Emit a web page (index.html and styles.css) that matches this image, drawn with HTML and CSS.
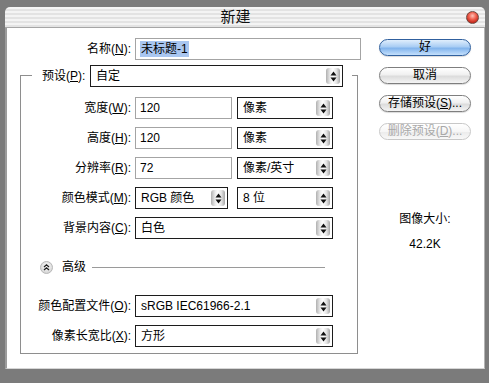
FILE: index.html
```html
<!DOCTYPE html>
<html lang="zh-CN">
<head>
<meta charset="utf-8">
<title>新建</title>
<link rel="stylesheet" href="styles.css">
</head>
<body>
<div class="window">
  <div class="titlebar"><span class="title">新建</span><span class="close"></span></div>
  <div class="content">
    <div class="form">
      <div class="row name-row">
        <span class="lbl">名称(<u>N</u>):</span>
        <div class="field input name-input"><span class="hl">未标题-1</span></div>
      </div>
      <div class="group">
        <div class="legend">
          <span class="legend-lbl">预设(<u>P</u>):</span>
          <div class="field select preset"><span class="val">自定</span><span class="spin"><svg width="7" height="11" viewBox="0 0 7 11"><path d="M3.5 0.5L6.5 4.5H0.5Z M0.5 6.5H6.5L3.5 10.5Z" fill="#111"/></svg></span></div>
        </div>
        <div class="row first">
          <span class="lbl">宽度(<u>W</u>):</span>
          <div class="field input num">120</div>
          <div class="field select unit"><span class="val">像素</span><span class="spin"><svg width="7" height="11" viewBox="0 0 7 11"><path d="M3.5 0.5L6.5 4.5H0.5Z M0.5 6.5H6.5L3.5 10.5Z" fill="#111"/></svg></span></div>
        </div>
        <div class="row">
          <span class="lbl">高度(<u>H</u>):</span>
          <div class="field input num">120</div>
          <div class="field select unit"><span class="val">像素</span><span class="spin"><svg width="7" height="11" viewBox="0 0 7 11"><path d="M3.5 0.5L6.5 4.5H0.5Z M0.5 6.5H6.5L3.5 10.5Z" fill="#111"/></svg></span></div>
        </div>
        <div class="row">
          <span class="lbl">分辨率(<u>R</u>):</span>
          <div class="field input num">72</div>
          <div class="field select unit"><span class="val">像素/英寸</span><span class="spin"><svg width="7" height="11" viewBox="0 0 7 11"><path d="M3.5 0.5L6.5 4.5H0.5Z M0.5 6.5H6.5L3.5 10.5Z" fill="#111"/></svg></span></div>
        </div>
        <div class="row">
          <span class="lbl">颜色模式(<u>M</u>):</span>
          <div class="field select mode"><span class="val">RGB 颜色</span><span class="spin"><svg width="7" height="11" viewBox="0 0 7 11"><path d="M3.5 0.5L6.5 4.5H0.5Z M0.5 6.5H6.5L3.5 10.5Z" fill="#111"/></svg></span></div>
          <div class="field select unit"><span class="val">8 位</span><span class="spin"><svg width="7" height="11" viewBox="0 0 7 11"><path d="M3.5 0.5L6.5 4.5H0.5Z M0.5 6.5H6.5L3.5 10.5Z" fill="#111"/></svg></span></div>
        </div>
        <div class="row">
          <span class="lbl">背景内容(<u>C</u>):</span>
          <div class="field select full"><span class="val">白色</span><span class="spin"><svg width="7" height="11" viewBox="0 0 7 11"><path d="M3.5 0.5L6.5 4.5H0.5Z M0.5 6.5H6.5L3.5 10.5Z" fill="#111"/></svg></span></div>
        </div>
        <div class="advanced">
          <span class="adv-icon"><svg width="13" height="13" viewBox="0 0 13 13"><defs><radialGradient id="g" cx="50%" cy="40%" r="60%"><stop offset="0" stop-color="#ffffff"/><stop offset="1" stop-color="#d2d2d2"/></radialGradient></defs><circle cx="6.5" cy="6.5" r="6" fill="url(#g)" stroke="#b8b8b8"/><path d="M4 6L6.5 3.8L9 6 M4 9L6.5 6.8L9 9" fill="none" stroke="#222" stroke-width="1.3"/></svg></span>
          <span class="adv-text">高级</span>
          <span class="adv-line"></span>
        </div>
        <div class="row after-adv">
          <span class="lbl">颜色配置文件(<u>O</u>):</span>
          <div class="field select full"><span class="val">sRGB IEC61966-2.1</span><span class="spin"><svg width="7" height="11" viewBox="0 0 7 11"><path d="M3.5 0.5L6.5 4.5H0.5Z M0.5 6.5H6.5L3.5 10.5Z" fill="#111"/></svg></span></div>
        </div>
        <div class="row">
          <span class="lbl">像素长宽比(<u>X</u>):</span>
          <div class="field select full"><span class="val">方形</span><span class="spin"><svg width="7" height="11" viewBox="0 0 7 11"><path d="M3.5 0.5L6.5 4.5H0.5Z M0.5 6.5H6.5L3.5 10.5Z" fill="#111"/></svg></span></div>
        </div>
      </div>
    </div>
    <div class="side">
      <div class="btn primary">好</div>
      <div class="btn">取消</div>
      <div class="btn">存储预设(<u>S</u>)...</div>
      <div class="btn disabled">删除预设(<u>D</u>)...</div>
      <div class="info-title">图像大小:</div>
      <div class="info-value">42.2K</div>
    </div>
  </div>
</div>
</body>
</html>
```

FILE: styles.css
```css
* { box-sizing: border-box; }

html, body {
  margin: 0;
  padding: 0;
}

body {
  width: 489px;
  height: 383px;
  background: #7b7b7b;
  font-family: "Liberation Sans", "Noto Sans CJK SC", sans-serif;
  font-size: 12px;
  color: #000;
  overflow: hidden;
}

.window {
  margin: 7px 0 0 5px;
  width: 480px;
}

.titlebar {
  height: 21px;
  display: flex;
  align-items: center;
  border-radius: 5px 5px 0 0;
  background: repeating-linear-gradient(to bottom, #f4f4f4 0, #f4f4f4 2px, #e3e3e3 2px, #e3e3e3 4px);
  border-bottom: 1px solid #a6a6a6;
}

.title {
  flex: 1;
  text-align: center;
  font-size: 15px;
  line-height: 20px;
  color: #111;
}

.close {
  width: 13px;
  height: 13px;
  margin-right: 6px;
  border-radius: 50%;
  border: 1px solid #6e4a42;
  background: radial-gradient(circle at 50% 35%, #ffc2b8 0, #f0604e 40%, #c4281c 75%, #8e1e16 100%);
}

.content {
  height: 341px;
  display: flex;
  background: #fff;
  border-left: 2px solid #9c9c9c;
  border-right: 1px solid #b4b4b4;
  border-bottom: 1px solid #d6d6d6;
}

.form {
  width: 372px;
  padding-left: 13px;
  padding-top: 10px;
}

.row {
  display: flex;
  align-items: center;
  height: 22px;
  margin-top: 8px;
}

.name-row { margin-top: 0; }

.lbl {
  text-align: right;
  margin-right: 4px;
  white-space: nowrap;
  line-height: 16px;
}

.name-row .lbl { width: 111px; }
.group .lbl { width: 110px; }

u { text-decoration: underline; text-underline-offset: 1px; }

.field {
  height: 22px;
  background: #fff;
  line-height: 20px;
  white-space: nowrap;
}

.input {
  border: 1px solid #a4a4a4;
  padding-left: 4px;
}

.name-input { width: 226px; }
.num { width: 97px; margin-right: 5px; }

.hl {
  background: #a9c6f0;
  padding: 1px 1px;
}

.select {
  display: flex;
  border: 1px solid #1c1c1c;
}

.select .val {
  flex: 1;
  padding-left: 5px;
}

.spin {
  width: 14px;
  margin: 2px 2px 2px 0;
  border-radius: 3px;
  display: flex;
  align-items: center;
  justify-content: center;
  background: linear-gradient(to right, #b0b0b0 0, #ececec 30%, #ffffff 50%, #e2e2e2 75%, #a6a6a6 100%);
}

.unit { width: 96px; }
.mode { width: 93px; margin-right: 9px; }
.full { width: 198px; }
.preset { width: 253px; margin-left: auto; margin-right: 9px; }

.group {
  margin-top: 15px;
  width: 338px;
  height: 279px;
  border: 1px solid #8e8e8e;
}

.legend {
  display: flex;
  align-items: center;
  margin-top: -11px;
  margin-left: 11px;
  width: 320px;
  height: 22px;
  padding-left: 10px;
  background: #fff;
}

.legend-lbl {
  line-height: 16px;
  white-space: nowrap;
}

.row.first { margin-top: 10px; }

.advanced {
  display: flex;
  align-items: center;
  height: 14px;
  margin-top: 21px;
  padding-left: 19px;
  padding-right: 32px;
}

.adv-icon {
  display: flex;
  width: 13px;
  height: 13px;
}

.adv-text {
  margin-left: 9px;
  line-height: 14px;
}

.adv-line {
  flex: 1;
  height: 0;
  margin-left: 6px;
  border-top: 1px solid #9a9a9a;
}

.row.after-adv { margin-top: 21px; }

.side {
  width: 92px;
  padding-top: 11px;
  display: flex;
  flex-direction: column;
  align-items: center;
}

.btn {
  width: 92px;
  height: 17px;
  margin-bottom: 11px;
  border-radius: 9px;
  border: 1px solid #7e7e7e;
  background: linear-gradient(to bottom, #ffffff 0, #f0f0f0 45%, #dcdcdc 55%, #f4f4f4 100%);
  text-align: center;
  line-height: 15px;
  white-space: nowrap;
  box-shadow: 0 1px 1px rgba(0,0,0,0.15);
}

.btn.primary {
  border-color: #30609e;
  background: linear-gradient(to bottom, #e0eefc 0, #a9cdf4 45%, #82b4ec 55%, #c4e0fc 100%);
}

.btn.disabled {
  color: #a8a8a8;
  border-color: #c8c8c8;
  background: linear-gradient(to bottom, #ffffff 0, #f6f6f6 50%, #ececec 55%, #f8f8f8 100%);
  box-shadow: none;
}

.info-title {
  margin-top: 61px;
  line-height: 14px;
}

.info-value {
  margin-top: 11px;
  line-height: 14px;
}
```
